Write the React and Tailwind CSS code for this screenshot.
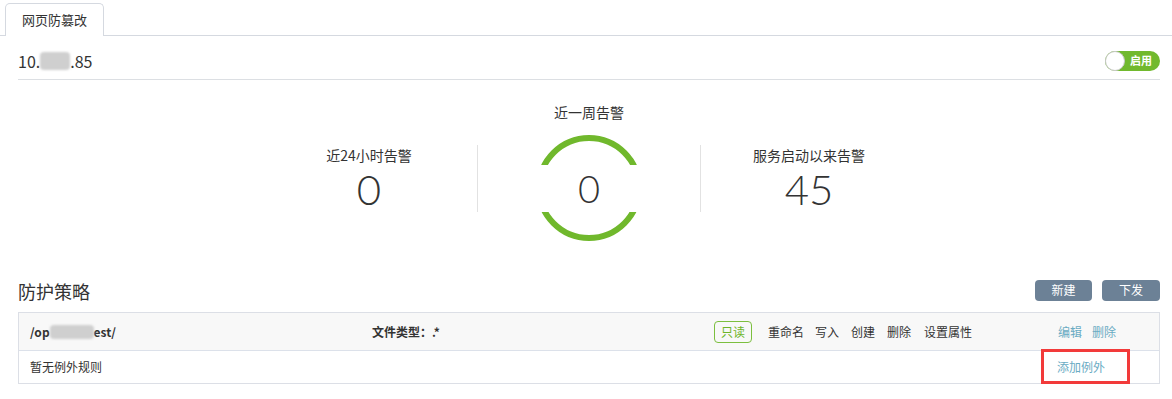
import React from 'react';

const FONT = { fontFamily: '"Noto Sans CJK SC", "Noto Sans", sans-serif' };
const NUM_FONT = { fontFamily: 'Lato, "Open Sans", sans-serif' };

function Blur({ w, h = 16 }) {
   return (
      <span
         className="inline-block rounded-sm bg-[#cfcfcf] blur-[1px] align-middle"
         style={{ width: w, height: h }}
      />
   );
}

function Ring() {
   return (
      <svg width="110" height="110" viewBox="0 0 110 110">
         <defs>
            <clipPath id="ringClip">
               <rect x="0" y="0" width="110" height="32" />
               <rect x="0" y="79" width="110" height="31" />
            </clipPath>
         </defs>
         <circle
            cx="55"
            cy="55"
            r="50"
            fill="none"
            stroke="#70b82c"
            strokeWidth="6"
            clipPath="url(#ringClip)"
         />
      </svg>
   );
}

function SideStat({ label, value }) {
   return (
      <div className="w-[216px] pt-[44px] flex flex-col items-center text-[#333]">
         <p className="text-[14px] leading-[18px]">{label}</p>
         <p className="mt-[5px] text-[42px] leading-[40px] font-light" style={NUM_FONT}>
            {value}
         </p>
      </div>
   );
}

export default function App() {
   return (
      <div className="w-full min-h-[399px] bg-white text-[#333]" style={FONT}>
         <div className="h-[36px] flex items-end pl-[5px] border-b border-[#d5d9e0]">
            <div className="w-[99px] h-[33px] -mb-px bg-white border border-b-0 border-[#d5d9e0] rounded-t-[5px] flex items-center justify-center text-[13px]">
               网页防篡改
            </div>
         </div>

         <div className="pl-[18px] pr-[12px]">
            <div className="h-[44px] flex items-center justify-between border-b border-[#dcdfe3] pt-[6px]">
               <div className="text-[16px] flex items-center">
                  <span>10.</span>
                  <Blur w={30} h={18} />
                  <span>.85</span>
               </div>
               <div className="relative w-[55px] h-[20px] rounded-full bg-[#71b92e] flex items-center justify-end pr-[8px]">
                  <span className="absolute left-0 top-0 w-[20px] h-[20px] rounded-full bg-white border border-[#c8c8c8]" />
                  <span className="text-[11px] text-white font-bold leading-none">启用</span>
               </div>
            </div>

            <div className="flex justify-center items-start pt-[22px]">
               <SideStat label="近24小时告警" value="0" />
               <div className="w-px h-[67px] mt-[43px] bg-[#e2e2e2]" />
               <div className="w-[222px] flex flex-col items-center">
                  <p className="text-[14px] leading-[20px]">近一周告警</p>
                  <div className="relative mt-[11px] w-[110px] h-[110px]">
                     <Ring />
                     <span
                        className="absolute inset-0 flex items-center justify-center text-[38px] font-light"
                        style={NUM_FONT}
                     >
                        0
                     </span>
                  </div>
               </div>
               <div className="w-px h-[67px] mt-[43px] bg-[#e2e2e2]" />
               <SideStat label="服务启动以来告警" value="45" />
            </div>

            <div className="mt-[33px] flex items-center justify-between">
               <h2 className="text-[18px] leading-[26px] pt-[2px]">防护策略</h2>
               <div className="flex gap-[10px]">
                  <button className="w-[57px] h-[21px] rounded-[4px] bg-[#6c8196] text-white text-[12px] leading-none">
                     新建
                  </button>
                  <button className="w-[58px] h-[21px] rounded-[4px] bg-[#6c8196] text-white text-[12px] leading-none">
                     下发
                  </button>
               </div>
            </div>

            <div className="relative mt-[8px] border border-[#dcdfe6] text-[12px]">
               <div className="h-[38px] bg-[#f8f8f8] border-b border-[#dce1ea] flex items-center">
                  <div className="w-[353px] pl-[11px] font-bold flex items-center">
                     <span>/op</span>
                     <Blur w={44} h={14} />
                     <span>est/</span>
                  </div>
                  <div className="w-[342px] font-bold">文件类型：.*</div>
                  <div className="w-[333px] flex items-center">
                     <span className="h-[22px] px-[6px] border border-[#7cbf3f] rounded-[4px] text-[#6db529] flex items-center">
                        只读
                     </span>
                     <span className="ml-[16px]">重命名</span>
                     <span className="ml-[11px]">写入</span>
                     <span className="ml-[12px]">创建</span>
                     <span className="ml-[12px]">删除</span>
                     <span className="ml-[13px]">设置属性</span>
                  </div>
                  <div className="flex gap-[10px] text-[#6aabc3] ml-[11px]">
                     <span>编辑</span>
                     <span>删除</span>
                  </div>
               </div>
               <div className="h-[32px] flex items-center justify-between">
                  <span className="pl-[11px]">暂无例外规则</span>
                  <span className="w-[102px] text-[#6aabc3]">添加例外</span>
               </div>
               <div className="absolute right-[29px] bottom-[-1px] w-[89px] h-[35px] border-[3px] border-[#f23a3a]" />
            </div>
         </div>
      </div>
   );
}
